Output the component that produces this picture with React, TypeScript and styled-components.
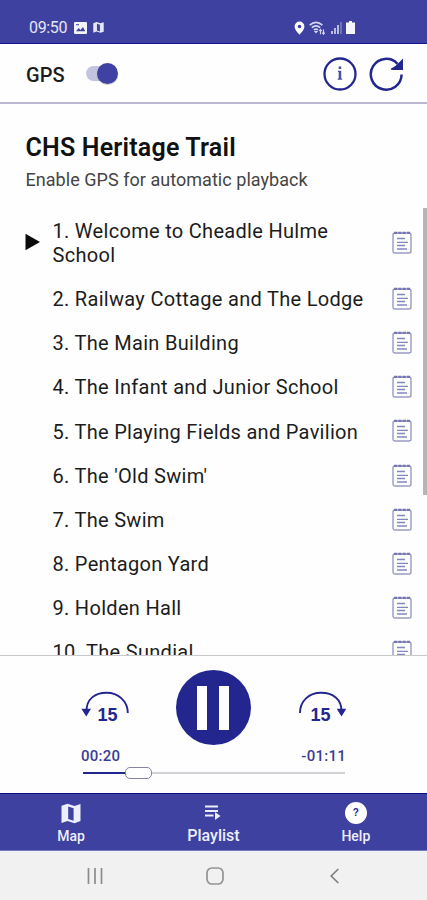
import React from "react";
import styled, { createGlobalStyle } from "styled-components";

const indigo = "#3e41a0";
const navy = "#23268f";

const GlobalStyle = createGlobalStyle`
  * { box-sizing: border-box; }
  body { margin: 0; background: #fefefe; font-family: Roboto, sans-serif; }
`;

const Screen = styled.div`
  width: 427px;
  height: 900px;
  display: flex;
  flex-direction: column;
  overflow: hidden;
  background: #fefefe;
  color: #1c1c1c;
`;

const StatusBar = styled.header`
  flex: none;
  height: 44px;
  padding: 12px 72px 0 29px;
  display: flex;
  justify-content: space-between;
  align-items: flex-start;
  background: ${indigo};
  border-bottom: 1px solid #11138a;
  color: #e4e5f6;
`;

const StatusGroup = styled.div<{ $gap: number }>`
  display: flex;
  align-items: center;
  height: 31px;
  gap: ${(p) => p.$gap}px;
`;

const Clock = styled.span`
  font-size: 16px;
  line-height: 32px;
  letter-spacing: -0.35px;
  margin-right: 1px;
`;

const Toolbar = styled.div`
  flex: none;
  height: 60px;
  padding: 0 23px 0 26px;
  display: flex;
  align-items: center;
  border-bottom: 2px solid #b9b8d0;
`;

const GpsLabel = styled.span`
  font-size: 20px;
  font-weight: 500;
  line-height: 24px;
  letter-spacing: 0.1px;
  width: 60px;
  padding-top: 3px;
`;

const Switch = styled.div`
  width: 33px;
  height: 22px;
  display: flex;
  align-items: center;
  margin-top: 1px;
`;

const Track = styled.span`
  width: 27px;
  height: 15px;
  border-radius: 8px;
  background: #c3c4e0;
`;

const Thumb = styled.span`
  width: 21px;
  height: 21px;
  margin-left: -16px;
  border-radius: 50%;
  background: #3f42a2;
  box-shadow: 0 1px 1px rgba(0, 0, 0, 0.2);
`;

const ToolbarActions = styled.div`
  margin-left: auto;
  display: flex;
  gap: 12px;
  padding-top: 1px;
`;

const Heading = styled.section`
  flex: none;
  height: 104px;
  padding: 28px 26px 0 25.5px;
`;

const Title = styled.h1`
  margin: 0;
  font-size: 25px;
  line-height: 32px;
  font-weight: 600;
  letter-spacing: 0.2px;
  color: #111;
`;

const Subtitle = styled.p`
  margin: 4px 0 0;
  font-size: 18px;
  line-height: 24px;
  font-weight: 400;
  letter-spacing: 0.04px;
  color: #444;
`;

const ListArea = styled.div`
  flex: none;
  height: 447px;
  display: flex;
  overflow: hidden;
`;

const TrackList = styled.ol`
  flex: 1;
  margin: 0;
  padding: 0 11px 0 25px;
  list-style: none;
`;

const TrackRow = styled.li`
  display: flex;
  align-items: center;
  padding: 10.1px 0;
`;

const Marker = styled.span`
  width: 27.5px;
  height: 18px;
  flex: none;
  display: flex;
`;

const TrackName = styled.span`
  width: 318px;
  font-size: 20px;
  line-height: 24px;
  letter-spacing: 0.3px;
  padding-top: 0.7px;
  margin-bottom: -0.7px;
`;

const NoteSlot = styled.span`
  margin-left: auto;
  height: 23px;
  display: flex;
`;

const Scrollbar = styled.div`
  width: 4px;
  height: 287px;
  background: #b5b5b5;
`;

const Player = styled.section`
  flex: none;
  height: 138px;
  border-top: 1px solid #c9c9c9;
  display: flex;
  flex-direction: column;
  padding: 14px 81px 0;
`;

const Controls = styled.div`
  display: flex;
  justify-content: space-between;
  align-items: center;
  height: 75px;
  margin-right: -1px;
`;

const SkipButton = styled.button`
  width: 50px;
  height: 36px;
  padding: 0;
  border: 0;
  background: none;
  display: grid;
  color: ${navy};
  & > * { grid-area: 1 / 1; }
`;

const SkipLabel = styled.span<{ $side: "back" | "forward" }>`
  align-self: end;
  justify-self: center;
  padding: ${(p) => (p.$side === "back" ? "0 0 1px 3px" : "0 3px 1px 0")};
  font: bold 18px/20px "Liberation Sans", sans-serif;
`;

const PauseButton = styled.button`
  width: 75px;
  height: 75px;
  padding: 0;
  margin: 0 1px 0 -1px;
  border: 0;
  border-radius: 50%;
  background: ${navy};
  display: flex;
  align-items: center;
  justify-content: center;
  gap: 12px;
`;

const PauseBar = styled.span`
  width: 10px;
  height: 44px;
  background: #fff;
`;

const Times = styled.div`
  display: flex;
  justify-content: space-between;
  margin-top: 1px;
  font-size: 15px;
  line-height: 20px;
  font-weight: 500;
  letter-spacing: 0.25px;
  color: #3b3d95;
`;

const Seek = styled.div`
  display: flex;
  align-items: center;
  height: 12px;
  margin: 1px 1px 0 2px;
`;

const Played = styled.span`
  width: 42px;
  height: 2px;
  background: ${navy};
`;

const Knob = styled.span`
  width: 27px;
  height: 12px;
  border: 1.5px solid #85859f;
  border-radius: 5px;
  background: #fff;
`;

const Remaining = styled.span`
  flex: 1;
  height: 2px;
  background: #d2d2d6;
`;

const TabBar = styled.nav`
  flex: none;
  height: 58px;
  display: grid;
  grid-template-columns: repeat(3, 1fr);
  background: ${indigo};
  border-top: 1px solid #090b82;
  border-bottom: 1px solid #7779bd;
  color: #eceef9;
`;

const Tab = styled.button<{ $active?: boolean }>`
  padding: 8px 0 0;
  border: 0;
  background: none;
  color: inherit;
  display: flex;
  flex-direction: column;
  align-items: center;
  font: 500 ${(p) => (p.$active ? 16 : 14)}px/20px Roboto, sans-serif;
  & > svg { height: 23px; }
`;

const TabLabel = styled.span`
  padding-top: 1px;
`;

const SystemNav = styled.footer`
  flex: none;
  height: 49px;
  display: grid;
  grid-template-columns: 191px 48px 188px;
  align-items: center;
  background: #f1f1f1;
  padding-top: 1px;
`;

const NavButton = styled.span<{ $side?: "left" | "right" }>`
  display: flex;
  justify-content: ${(p) => (p.$side === "left" ? "flex-end" : p.$side === "right" ? "flex-start" : "center")};
  padding: ${(p) => (p.$side === "left" ? "0 88px 0 0" : p.$side === "right" ? "0 0 0 91px" : "0")};
`;

const NoteIcon = () => (
  <svg width="20" height="23" viewBox="0 0 20 23" fill="none">
    <rect x="1" y="2" width="18" height="20" rx="2" stroke="#9a9bc4" strokeWidth="1.4" />
    <path d="M2 1.9H18" stroke="#7375b4" strokeWidth="2.2" strokeDasharray="3.2 1.1" />
    <path d="M5 7.5h8M5 11.3h11M5 14.5h8M5 18h10" stroke="#8486c0" strokeWidth="1.3" />
  </svg>
);

const PlayIcon = () => (
  <svg width="16" height="18" viewBox="0 0 16 18">
    <path d="M.5 .8 15 9 .5 17.2z" fill="#0b0b0b" />
  </svg>
);

const MapIcon = ({ size }: { size: number }) => (
  <svg width={size} height={size} viewBox="0 0 20 20" fill="currentColor">
    <path
      fillRule="evenodd"
      d="M.5 2.3 6.5.2 13.5 2.4 19.5.4V17.5l-6 2.2-7-2.3-6 2.2zM7.2 3v12.500l5.400 1.800V4.800z"
    />
  </svg>
);

const ImageIcon = () => (
  <svg width="13" height="12" viewBox="0 0 13 12">
    <rect width="13" height="12" rx="1" fill="#f3f4fb" />
    <path d="M2 9.3 4.7 6l1.8 2L9 5l2.3 4.3z" fill={indigo} />
    <path d="M2 2.7h3" stroke={indigo} />
  </svg>
);

const PinIcon = () => (
  <svg width="11" height="14" viewBox="0 0 11 14">
    <path
      fillRule="evenodd"
      d="M5.5.5A4.9 4.9 0 0 0 .6 5.4C.6 9 5.5 13.5 5.5 13.5S10.4 9 10.4 5.4A4.9 4.9 0 0 0 5.5.5zm0 3.200a1.800 1.800 0 1 1 0 3.600 1.800 1.800 0 0 1 0-3.600z"
      fill="#fff"
    />
  </svg>
);

const WifiIcon = () => (
  <svg width="17" height="14" viewBox="0 0 17 14" fill="none" stroke="#d4d5ee" strokeWidth="1.6">
    <path d="M.7 4.2Q7 -1.5 13.4 4.2M2.8 6.6Q7 3 11.2 6.6M4.9 9Q7 7.2 9 9" />
    <path d="M7 12.5 4.8 10h4.4z" fill="#d4d5ee" stroke="none" />
    <path
      d="M11.5 13.2V8.5M14.5 8.5v4.700M10.300 10l1.200-1.500 1.200 1.500M13.300 11.700l1.200 1.500 1.200-1.500"
      strokeWidth="1.2"
    />
  </svg>
);

const SignalIcon = () => (
  <svg width="11" height="13" viewBox="0 0 11 13" fill="#b9bbe0">
    <path d="M0 10h2v3H0zM3 7h2v6H3zM6 4h2v9H6z" />
    <path d="M9 1h2v12H9z" opacity=".4" />
  </svg>
);

const BatteryIcon = () => (
  <svg width="9" height="13" viewBox="0 0 9 13" fill="#f4f5fb">
    <path d="M3 0h3v1.5h3V13H0V1.5h3z" />
  </svg>
);

const InfoIcon = () => (
  <svg width="34" height="34" viewBox="0 0 34 34">
    <circle cx="17" cy="17" r="15.5" fill="none" stroke={navy} strokeWidth="2.3" />
    <path d="M15.7 9.5h2.500v2.600h-2.500zM15 13.700h3.200v7.700h.9v1.300h-4.400v-1.300h1v-6.300H15z" fill="#4b4da0" />
  </svg>
);

const ReloadIcon = () => (
  <svg width="35" height="34" viewBox="0 0 35 34">
    <path d="M28.5 6.800A15.400 15.400 0 1 0 32.600 17.500" fill="none" stroke={navy} strokeWidth="2.500" />
    <path d="M34 1.500v11.500H22.500z" fill={navy} />
    <path d="M22 12.300 30 8" stroke={navy} strokeWidth="1.500" />
  </svg>
);

const BackArc = () => (
  <svg width="50" height="36" viewBox="0 0 50 36">
    <path d="M5.5 21C5.5 9 14 2.800 25.500 2.800S46.800 11 46.800 23" fill="none" stroke={navy} strokeWidth="1.900" />
    <path d="M.4 18.700H10L5.300 26.500z" fill={navy} />
  </svg>
);

const ForwardArc = () => (
  <svg width="50" height="36" viewBox="0 0 50 36">
    <path d="M44.500 21C44.500 9 36 2.800 24 2.800S3 11 3 23" fill="none" stroke={navy} strokeWidth="1.900" />
    <path d="M39.700 18.700H49.300L44.500 26.500z" fill={navy} />
  </svg>
);

const PlaylistIcon = () => (
  <svg width="18" height="20" viewBox="0 0 18 20" fill="currentColor">
    <path d="M1 2h13v2H1zM1 6.500h13v2H1zM1 11h8.500v2H1zM11 8.500l5.500 4-5.500 4z" />
  </svg>
);

const HelpBadge = styled.span`
  width: 22px;
  height: 22px;
  margin-bottom: 1px;
  border-radius: 50%;
  background: #fff;
  color: ${navy};
  font: bold 10px/22px "Liberation Sans", sans-serif;
  text-align: center;
`;

const RecentsIcon = () => (
  <svg width="16" height="16" viewBox="0 0 16 16">
    <path d="M1.500 0v16M8 0v16M14.500 0v16" stroke="#8c8c8c" strokeWidth="1.700" />
  </svg>
);

const HomeIcon = () => (
  <svg width="18" height="18" viewBox="0 0 18 18">
    <rect x="1" y="1" width="16" height="16" rx="5" fill="none" stroke="#949494" strokeWidth="1.700" />
  </svg>
);

const ChevronIcon = () => (
  <svg width="9" height="16" viewBox="0 0 9 16">
    <path d="M8.300 1 1.200 8l7.100 7" fill="none" stroke="#808080" strokeWidth="1.700" />
  </svg>
);

const stops = [
  "Welcome to Cheadle Hulme School",
  "Railway Cottage and The Lodge",
  "The Main Building",
  "The Infant and Junior School",
  "The Playing Fields and Pavilion",
  "The 'Old Swim'",
  "The Swim",
  "Pentagon Yard",
  "Holden Hall",
  "The Sundial",
];

export default function App() {
  return (
    <>
      <GlobalStyle />
      <Screen>
        <StatusBar>
          <StatusGroup $gap={6}>
            <Clock>09:50</Clock>
            <ImageIcon />
            <MapIcon size={11} />
          </StatusGroup>
          <StatusGroup $gap={4.5}>
            <PinIcon />
            <WifiIcon />
            <SignalIcon />
            <BatteryIcon />
          </StatusGroup>
        </StatusBar>
        <Toolbar>
          <GpsLabel>GPS</GpsLabel>
          <Switch>
            <Track />
            <Thumb />
          </Switch>
          <ToolbarActions>
            <InfoIcon />
            <ReloadIcon />
          </ToolbarActions>
        </Toolbar>
        <Heading>
          <Title>CHS Heritage Trail</Title>
          <Subtitle>Enable GPS for automatic playback</Subtitle>
        </Heading>
        <ListArea>
          <TrackList>
            {stops.map((name, i) => (
              <TrackRow key={name}>
                <Marker>{i === 0 && <PlayIcon />}</Marker>
                <TrackName>{`${i + 1}. ${name}`}</TrackName>
                <NoteSlot>
                  <NoteIcon />
                </NoteSlot>
              </TrackRow>
            ))}
          </TrackList>
          <Scrollbar />
        </ListArea>
        <Player>
          <Controls>
            <SkipButton>
              <BackArc />
              <SkipLabel $side="back">15</SkipLabel>
            </SkipButton>
            <PauseButton>
              <PauseBar />
              <PauseBar />
            </PauseButton>
            <SkipButton>
              <ForwardArc />
              <SkipLabel $side="forward">15</SkipLabel>
            </SkipButton>
          </Controls>
          <Times>
            <span>00:20</span>
            <span>-01:11</span>
          </Times>
          <Seek>
            <Played />
            <Knob />
            <Remaining />
          </Seek>
        </Player>
        <TabBar>
          <Tab>
            <MapIcon size={20} />
            <TabLabel>Map</TabLabel>
          </Tab>
          <Tab $active>
            <PlaylistIcon />
            <TabLabel>Playlist</TabLabel>
          </Tab>
          <Tab>
            <HelpBadge>?</HelpBadge>
            <TabLabel>Help</TabLabel>
          </Tab>
        </TabBar>
        <SystemNav>
          <NavButton $side="left">
            <RecentsIcon />
          </NavButton>
          <NavButton>
            <HomeIcon />
          </NavButton>
          <NavButton $side="right">
            <ChevronIcon />
          </NavButton>
        </SystemNav>
      </Screen>
    </>
  );
}
